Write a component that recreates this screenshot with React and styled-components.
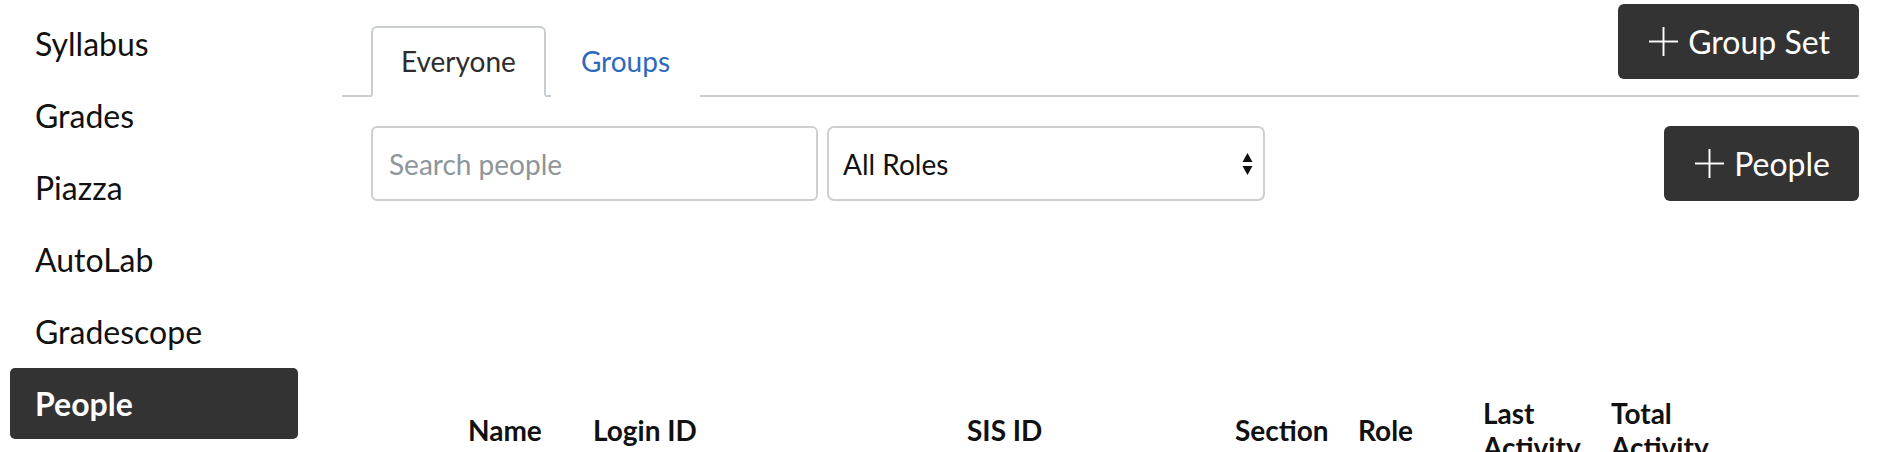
import React from 'react'
import styled, { createGlobalStyle } from 'styled-components'

const GlobalStyle = createGlobalStyle`
  html, body {
    margin: 0;
    padding: 0;
    background: #fff;
  }
  body {
    font-family: Lato, "Noto Sans", sans-serif;
    color: #111;
  }
`

const navItems = ['Syllabus', 'Grades', 'Piazza', 'AutoLab', 'Gradescope', 'People']

const columns = [
  { label: '', width: 97 },
  { label: 'Name', width: 125 },
  { label: 'Login ID', width: 374 },
  { label: 'SIS ID', width: 268 },
  { label: 'Section', width: 123 },
  { label: 'Role', width: 125 },
  { label: 'Last Activity', width: 128 },
  { label: 'Total Activity', width: 130 },
  { label: '' },
]

const PlusIcon = () => (
  <svg width="31" height="31" viewBox="0 0 32 32" fill="none" stroke="#fff" strokeWidth="2">
    <line x1="16" y1="1" x2="16" y2="31" />
    <line x1="1" y1="16" x2="31" y2="16" />
  </svg>
)

const SortArrows = () => (
  <svg width="11" height="24" viewBox="0 0 11 24">
    <path d="M5.5 1 L10.5 10 L0.5 10 Z" fill="#111" />
    <path d="M0.5 14 L10.5 14 L5.5 23 Z" fill="#111" />
  </svg>
)

const App = () => {
  return (
    <Page>
      <GlobalStyle />
      <Sidebar>
        {navItems.map((item) => (
          <NavItem key={item} $active={item === 'People'}>{item}</NavItem>
        ))}
      </Sidebar>
      <Main>
        <TabHeader>
          <Tabs>
            <Tab $active>Everyone</Tab>
            <Tab>Groups</Tab>
          </Tabs>
          <DarkButton $top>
            <PlusIcon />
            Group Set
          </DarkButton>
        </TabHeader>

        <Toolbar>
          <SearchInput type="text" placeholder="Search people" />
          <SelectWrap>
            <RoleSelect defaultValue="all">
              <option value="all">All Roles</option>
              <option value="student">Student</option>
              <option value="teacher">Teacher</option>
              <option value="ta">TA</option>
            </RoleSelect>
            <ArrowSlot>
              <SortArrows />
            </ArrowSlot>
          </SelectWrap>
          <Spacer />
          <DarkButton>
            <PlusIcon />
            People
          </DarkButton>
        </Toolbar>

        <Roster>
          <colgroup>
            {columns.map((c, i) => (
              <col key={i} style={c.width ? { width: c.width } : undefined} />
            ))}
          </colgroup>
          <thead>
            <tr>
              {columns.map((c, i) => (
                <HeadCell key={i}>{c.label}</HeadCell>
              ))}
            </tr>
          </thead>
        </Roster>
      </Main>
    </Page>
  )
}

const Page = styled.div`
  display: flex;
  width: 1878px;
  min-height: 452px;
  overflow: hidden;
`

const Sidebar = styled.nav`
  flex: 0 0 288px;
  padding: 8px 0 0 10px;
  margin-right: 44px;
  display: flex;
  flex-direction: column;
  gap: 1px;
`

const NavItem = styled.div`
  height: 71px;
  display: flex;
  align-items: center;
  padding-left: 25px;
  font-size: 32px;
  line-height: 38px;
  border-radius: 5px;
  color: ${(p) => (p.$active ? '#fff' : '#111')};
  background: ${(p) => (p.$active ? '#333' : 'transparent')};
  font-weight: ${(p) => (p.$active ? 700 : 400)};
`

const Main = styled.main`
  flex: 1;
  min-width: 0;
  padding-right: 19px;
`

const TabHeader = styled.div`
  display: flex;
  justify-content: space-between;
  align-items: flex-end;
  padding: 4px 0 0 29px;
  border-bottom: 2px solid #c7cdd1;
`

const Tabs = styled.ul`
  display: flex;
  gap: 5px;
  margin: 0 0 -2px;
  padding: 0;
  list-style: none;
`

const Tab = styled.li`
  height: 71px;
  box-sizing: border-box;
  display: flex;
  align-items: center;
  padding: 0 28px 2px;
  font-size: 28px;
  line-height: 34px;
  border: 2px solid ${(p) => (p.$active ? '#c7cdd1' : 'transparent')};
  border-bottom: 2px solid ${(p) => (p.$active ? '#fff' : 'transparent')};
  border-radius: 6px 6px 0 0;
  background: #fff;
  color: ${(p) => (p.$active ? '#2d2d2d' : '#2d6abf')};
`

const DarkButton = styled.button`
  display: flex;
  align-items: center;
  gap: 9px;
  height: 75px;
  padding: 0 29px 0 30px;
  margin-bottom: ${(p) => (p.$top ? '16px' : '0')};
  border: none;
  border-radius: 6px;
  background: #333;
  color: #fff;
  font-family: Lato, "Noto Sans", sans-serif;
  font-size: 32px;
  line-height: 38px;
  cursor: pointer;
`

const Toolbar = styled.div`
  display: flex;
  align-items: center;
  gap: 9px;
  padding: 29px 0 0 29px;
`

const SearchInput = styled.input`
  width: 447px;
  height: 75px;
  box-sizing: border-box;
  padding: 0 16px;
  border: 2px solid #cfcfcf;
  border-radius: 6px;
  font-family: Lato, "Noto Sans", sans-serif;
  font-size: 28px;
  color: #111;
  outline: none;
  &::placeholder {
    color: #8e959b;
  }
`

const SelectWrap = styled.div`
  position: relative;
  width: 438px;
  height: 75px;
`

const RoleSelect = styled.select`
  appearance: none;
  width: 100%;
  height: 100%;
  box-sizing: border-box;
  padding: 0 40px 0 14px;
  border: 2px solid #cfcfcf;
  border-radius: 7px;
  background: #fff;
  font-family: Lato, "Noto Sans", sans-serif;
  font-size: 28px;
  color: #111;
  outline: none;
`

const ArrowSlot = styled.span`
  position: absolute;
  right: 12px;
  top: 50%;
  transform: translateY(-50%);
  display: flex;
  pointer-events: none;
`

const Spacer = styled.div`
  flex: 1;
`

const Roster = styled.table`
  margin: 195px 0 0 29px;
  width: calc(100% - 29px);
  table-layout: fixed;
  border-collapse: collapse;
`

const HeadCell = styled.th`
  padding: 0 12px 0 0;
  text-align: left;
  vertical-align: middle;
  font-size: 28px;
  line-height: 34px;
  font-weight: 700;
  color: #111;
`

export default App
